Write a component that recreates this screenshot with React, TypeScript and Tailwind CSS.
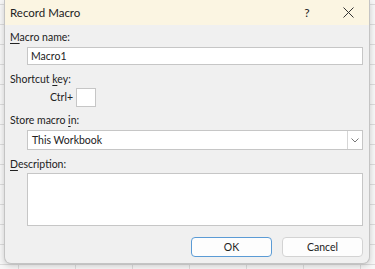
import React from 'react';

const Label: React.FC<{ k: string; pre?: string; post?: string; className?: string }> = ({ k, pre = '', post = '', className = '' }) => (
  <div className={`h-[15px] ${className}`}>
    {pre}
    <span className="underline underline-offset-[2px] decoration-[1px]">{k}</span>
    {post}
  </div>
);

const App: React.FC = () => {
  return (
    <div className="w-[375px] h-[269px] overflow-hidden pl-[4px] bg-[#f7f7f7] bg-[linear-gradient(to_right,#dcdcdc_1px,transparent_1px),linear-gradient(to_bottom,#dcdcdc_1px,transparent_1px)] bg-[size:57px_20px] bg-[position:18px_4px] text-[#222] text-[10.5px] leading-[15px] font-['Lato','Noto_Sans',sans-serif]">
      <div className="w-[366px] h-[264px] flex flex-col bg-[#f0f0f0] border border-t-0 border-[#c4c4c4] rounded-b-[7px] shadow-[0_2px_6px_rgba(0,0,0,0.18)] overflow-hidden">
        {/* Title bar */}
        <div className="h-[25px] shrink-0 flex items-center bg-[#fbf5e2] pl-[5px]">
          <span className="text-[11.5px]">Record Macro</span>
          <span className="ml-auto w-[10px] text-center text-[12px]">?</span>
          <span className="ml-[30px] mr-[15px] w-[12px] flex justify-center">
            <svg width="11" height="11" viewBox="0 0 11 11">
              <path d="M0.5 0.5 L10.5 10.5 M10.5 0.5 L0.5 10.5" stroke="#333" strokeWidth="1" />
            </svg>
          </span>
        </div>

        {/* Body */}
        <div className="flex flex-col pl-[5px] pr-[5px] pt-[5px]">
          <Label k="M" post="acro name:" />
          <div className="mt-[2px] ml-[17px] w-[336px] h-[18px] bg-white border border-[#c6c6c6] flex items-center px-[3px]">
            Macro1
          </div>

          <Label className="mt-[7px]" k="k" pre="Shortcut " post="ey:" />
          <div className="flex items-center h-[19px] ml-[40px] mt-[1px]">
            <span className="w-[22px] text-right">Ctrl+</span>
            <div className="ml-[4px] w-[20px] h-[19px] bg-white border border-[#c6c6c6]" />
          </div>

          <Label className="mt-[6px]" k="i" pre="Store macro " post="n:" />
          <div className="mt-[2px] ml-[17px] w-[336px] h-[20px] bg-white border border-[#c6c6c6] flex items-center">
            <span className="pl-[4px] flex-1">This Workbook</span>
            <span className="w-[15px] h-full border-l border-[#d6d6d6] flex items-center justify-center">
              <svg width="8" height="5" viewBox="0 0 8 5">
                <path d="M0.5 0.5 L4 4 L7.5 0.5" stroke="#777" strokeWidth="1" fill="none" />
              </svg>
            </span>
          </div>

          <Label className="mt-[7px]" k="D" post="escription:" />
          <div className="mt-[1px] ml-[17px] w-[336px] h-[53px] bg-white border border-[#c6c6c6]" />

          <div className="mt-[11px] flex justify-end gap-[10px] pr-[1px]">
            <button className="w-[81px] h-[20px] rounded-[4px] bg-[#fdfdfd] border border-[#5b9bd5]">
              OK
            </button>
            <button className="w-[81px] h-[20px] rounded-[4px] bg-[#fdfdfd] border border-[#d3d3d3]">
              Cancel
            </button>
          </div>
        </div>
      </div>
    </div>
  );
};

export default App;
